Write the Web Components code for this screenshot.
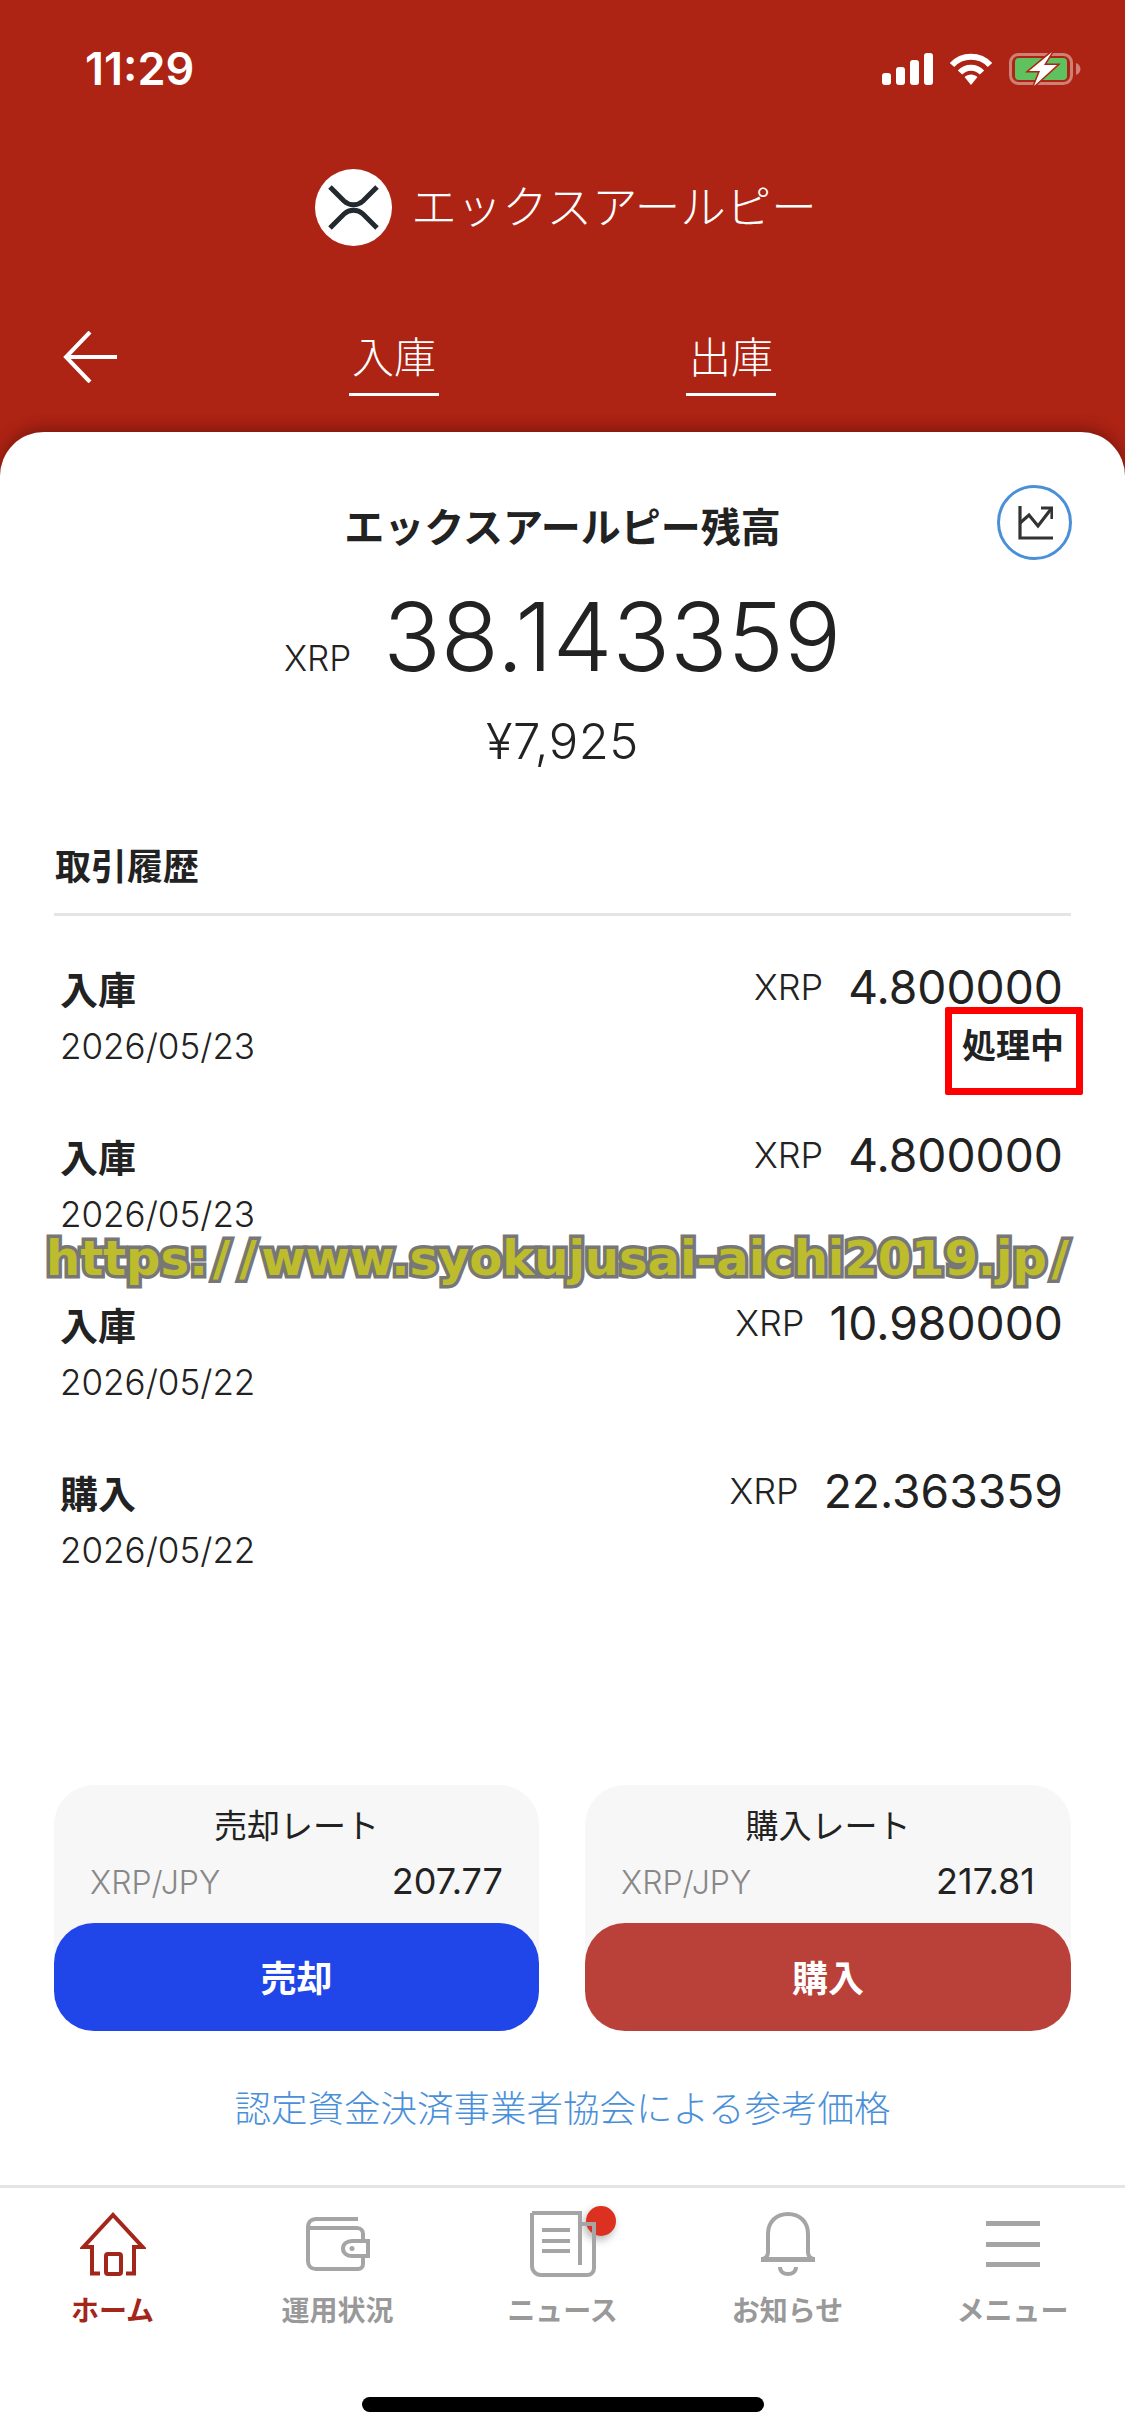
<!DOCTYPE html>
<html lang="ja">
<head>
<meta charset="utf-8">
<title>XRP</title>
<style>
  html, body { margin: 0; padding: 0; background: #fff; }
  body {
    width: 1125px;
    height: 2436px;
    overflow: hidden;
    font-family: Inter, "Noto Sans CJK JP", sans-serif;
    color: #222;
  }
</style>
</head>
<body>
<app-screen>
  <status-bar slot="top" time="11:29"></status-bar>
  <coin-title slot="top">エックスアールピー</coin-title>
  <action-bar slot="top"></action-bar>

  <balance-summary label="エックスアールピー残高" amount="38.143359" yen="¥7,925"></balance-summary>

  <history-list heading="取引履歴">
    <history-row kind="入庫" date="2026/05/23" amount="4.800000" status="処理中"></history-row>
    <history-row kind="入庫" date="2026/05/23" amount="4.800000"></history-row>
    <history-row kind="入庫" date="2026/05/22" amount="10.980000"></history-row>
    <history-row kind="購入" date="2026/05/22" amount="22.363359"></history-row>
  </history-list>

  <rate-row>
    <rate-panel title="売却レート" rate="207.77" action="売却" tone="sell"></rate-panel>
    <rate-panel title="購入レート" rate="217.81" action="購入" tone="buy"></rate-panel>
  </rate-row>
  <ref-link>認定資金決済事業者協会による参考価格</ref-link>

  <tab-bar slot="bottom"></tab-bar>
  <home-indicator slot="bottom"></home-indicator>

  <url-stamp slot="over" text="https://www.syokujusai-aichi2019.jp/"></url-stamp>
</app-screen>

<script>
const CJK = 'Inter, "Noto Sans CJK JP", sans-serif';

class AppScreen extends HTMLElement {
  constructor() {
    super();
    this.attachShadow({ mode: 'open' }).innerHTML = `
      <style>
        :host { display: flex; flex-direction: column; position: relative; width: 1125px; height: 2436px; background: #ad2314; }
        .sheet {
          flex: 1;
          display: flex;
          flex-direction: column;
          background: #fff;
          border-radius: 44px 44px 0 0;
          box-shadow: 0 -4px 14px rgba(60, 10, 5, .4);
          padding: 0 54px;
          min-height: 0;
        }
        .bottom { background: #fff; }
      </style>
      <slot name="top"></slot>
      <div class="sheet"><slot></slot></div>
      <div class="bottom"><slot name="bottom"></slot></div>
      <slot name="over"></slot>
    `;
  }
}

class StatusBar extends HTMLElement {
  constructor() {
    super();
    this.attachShadow({ mode: 'open' }).innerHTML = `
      <style>
        :host { display: flex; align-items: center; justify-content: space-between; height: 68px; padding: 35px 43px 0 85px; color: #fff; }
        .time { font: 600 45px/68px Inter, sans-serif; }
        .icons { display: flex; align-items: center; gap: 16px; }
        svg { display: block; overflow: visible; }
      </style>
      <span class="time">${this.getAttribute('time')}</span>
      <span class="icons">
        <svg width="51" height="32" viewBox="0 0 51 32" fill="#fff">
          <rect x="0" y="20" width="9" height="12" rx="3"/>
          <rect x="14" y="14" width="9" height="18" rx="3"/>
          <rect x="28" y="7" width="9" height="25" rx="3"/>
          <rect x="42" y="0" width="9" height="32" rx="3"/>
        </svg>
        <svg width="44" height="32" viewBox="0 0 44 32" fill="none" stroke="#fff" stroke-width="6">
          <path d="M3 12C13 1 31 1 41 12"/>
          <path d="M11 19.500C17 13 27 13 33 19.500"/>
          <path d="M15.500 24 22 32 28.500 24C25 20.500 19 20.500 15.500 24Z" fill="#fff" stroke="none"/>
        </svg>
        <svg width="73" height="34" viewBox="0 0 73 34">
          <rect x="1.500" y="2.500" width="61" height="29" rx="8" fill="none" stroke="#fff" stroke-opacity=".42" stroke-width="3"/>
          <path d="M67 11c3 1 4.500 3.500 4.500 6s-1.500 5-4.500 6z" fill="#fff" fill-opacity=".42"/>
          <rect x="6" y="6" width="52" height="22" rx="4" fill="#5fc25f"/>
          <path d="M43 0 20 19h11l-6 15 23-21H35z" fill="#fff" stroke="#ad2314" stroke-width="3" paint-order="stroke"/>
        </svg>
      </span>
    `;
  }
}

class CoinTitle extends HTMLElement {
  constructor() {
    super();
    this.attachShadow({ mode: 'open' }).innerHTML = `
      <style>
        :host { display: flex; align-items: center; justify-content: center; gap: 19px; height: 77px; margin-top: 66px; padding-left: 7px; color: #fff; font: 300 45.500px/77px ${CJK}; }
        svg { display: block; }
      </style>
      <svg width="77" height="77" viewBox="0 0 77 77">
        <circle cx="38.500" cy="38.500" r="38.500" fill="#fff"/>
        <path d="M15 18 29 32c5.500 5 13.500 5 19 0L62 18M15 59 29 45c5.500-5 13.500-5 19 0L62 59" fill="none" stroke="#23292f" stroke-width="5"/>
      </svg>
      <span><slot></slot></span>
    `;
  }
}

class ActionBar extends HTMLElement {
  constructor() {
    super();
    this.attachShadow({ mode: 'open' }).innerHTML = `
      <style>
        :host { display: grid; grid-template-columns: 349px 90px 247px 90px; height: 113px; margin-top: 73px; position: relative; color: #fff; font: 300 42px/1 ${CJK}; }
        .back { display: flex; align-items: flex-start; padding: 12px 0 0 63px; }
        .tab { display: flex; flex-direction: column; align-items: center; justify-content: flex-end; height: 77px; border-bottom: 3px solid #fff; padding-bottom: 14px; box-sizing: border-box; }
        svg { display: block; }
      </style>
      <span class="back">
        <svg width="54" height="52" viewBox="0 0 54 52" fill="none" stroke="#fff" stroke-width="4">
          <path d="M27 1 3 26l24 25M3 26h51"/>
        </svg>
      </span>
      <span class="tab">入庫</span>
      <span></span>
      <span class="tab">出庫</span>
    `;
  }
}

class BalanceSummary extends HTMLElement {
  constructor() {
    super();
    this.attachShadow({ mode: 'open' }).innerHTML = `
      <style>
        :host { display: flex; flex-direction: column; align-items: center; position: relative; height: 417px; box-sizing: border-box; padding-top: 71px; }
        .label { font: 700 40px/50px ${CJK}; color: #222; }
        .amount { display: flex; align-items: baseline; gap: 32px; height: 110px; margin-top: 29px; font-family: Inter, sans-serif; font-weight: 300; }
        .unit { font-size: 35px; }
        .value { font-size: 95px; line-height: 110px; }
        .yen { font: 300 49px/60px Inter, "Noto Sans CJK JP", sans-serif; letter-spacing: .5px; margin-top: 20px; }
        .chart { position: absolute; top: 53px; right: -1px; box-sizing: border-box; width: 75px; height: 75px; border-radius: 50%; border: 3.500px solid #4a90d9; display: flex; align-items: center; justify-content: center; }
        svg { display: block; }
      </style>
      <div class="label">${this.getAttribute('label')}</div>
      <div class="amount"><span class="unit">XRP</span><span class="value">${this.getAttribute('amount')}</span></div>
      <div class="yen">${this.getAttribute('yen')}</div>
      <div class="chart">
        <svg width="36" height="36" viewBox="0 0 36 36" fill="none" stroke="#333" stroke-width="3.200">
          <path d="M3 1v32h33"/>
          <path d="M3 18 12 10l9 11L34 4"/>
          <path d="M24 3h11v11"/>
        </svg>
      </div>
    `;
  }
}

class HistoryList extends HTMLElement {
  constructor() {
    super();
    this.attachShadow({ mode: 'open' }).innerHTML = `
      <style>
        :host { display: block; }
        h2 { margin: 0; padding: 0 0 28px 1px; font: 700 36px/36px ${CJK}; color: #222; border-bottom: 3px solid #e5e5e5; }
        .rows { padding-top: 50px; }
      </style>
      <h2>${this.getAttribute('heading')}</h2>
      <div class="rows"><slot></slot></div>
    `;
  }
}

class HistoryRow extends HTMLElement {
  constructor() {
    super();
    const status = this.getAttribute('status');
    this.attachShadow({ mode: 'open' }).innerHTML = `
      <style>
        :host { display: flex; justify-content: space-between; position: relative; height: 168px; padding: 0 8px 0 6px; color: #222; }
        .kind { font: 700 38px/48px ${CJK}; }
        .date { font: 300 35px/40px Inter, sans-serif; margin-top: 12px; }
        .amount { display: flex; align-items: center; justify-content: flex-end; gap: 25px; height: 48px; margin-top: -3px; font-family: Inter, sans-serif; font-weight: 300; }
        .unit { font-size: 36px; }
        .value { font-size: 46.200px; line-height: 48px; font-weight: 400; }
        .status { position: absolute; right: -12px; top: 41px; box-sizing: border-box; width: 138px; height: 88px; border: 7px solid #f00; border-radius: 2px; padding: 12px 12px 0 0; text-align: right; font: 700 34px/40px ${CJK}; }
      </style>
      <div>
        <div class="kind">${this.getAttribute('kind')}</div>
        <div class="date">${this.getAttribute('date')}</div>
      </div>
      <div class="amount"><span class="unit">XRP</span><span class="value">${this.getAttribute('amount')}</span></div>
      ${status ? `<div class="status">${status}</div>` : ''}
    `;
  }
}

class RateRow extends HTMLElement {
  constructor() {
    super();
    this.attachShadow({ mode: 'open' }).innerHTML = `
      <style>
        :host { display: grid; grid-template-columns: 485px 486px; justify-content: space-between; margin-top: auto; }
      </style>
      <slot></slot>
    `;
  }
}

class RatePanel extends HTMLElement {
  constructor() {
    super();
    const bg = this.getAttribute('tone') === 'sell' ? '#2045e8' : '#b9413a';
    this.attachShadow({ mode: 'open' }).innerHTML = `
      <style>
        :host { display: block; background: #f7f7f7; border-radius: 40px; }
        .title { text-align: center; padding-top: 17px; font: 400 33px/48px ${CJK}; color: #222; }
        .rate { display: flex; justify-content: space-between; align-items: baseline; padding: 0 36px; height: 72px; margin-top: 1px; font-family: Inter, sans-serif; line-height: 60px; }
        .pair { font-size: 32px; font-weight: 300; color: #888; }
        .num { font-size: 36px; font-weight: 400; color: #222; }
        .btn { display: flex; align-items: center; justify-content: center; height: 108px; box-sizing: border-box; padding-top: 3px; border-radius: 40px; background: ${bg}; color: #fff; font: 700 36px/1 ${CJK}; }
      </style>
      <div class="title">${this.getAttribute('title')}</div>
      <div class="rate"><span class="pair">XRP/JPY</span><span class="num">${this.getAttribute('rate')}</span></div>
      <div class="btn">${this.getAttribute('action')}</div>
    `;
  }
}

class RefLink extends HTMLElement {
  constructor() {
    super();
    this.attachShadow({ mode: 'open' }).innerHTML = `
      <style>
        :host { display: block; text-align: center; padding: 54px 0 52px; font: 300 36.500px/48px ${CJK}; color: #4a90d9; }
      </style>
      <slot></slot>
    `;
  }
}

const TAB_ICONS = {
  home: `<svg width="66" height="66" viewBox="0 0 66 66" fill="none" stroke="currentColor" stroke-width="4">
      <path d="M12 64V36H3.500L33 4 62.500 36H54V64"/>
      <path d="M10 62.500H20M56 62.500H46"/>
      <rect x="26" y="43" width="15" height="20" rx="2"/>
    </svg>`,
  wallet: `<svg width="64" height="54" viewBox="0 0 64 54" fill="none" stroke="currentColor" stroke-width="4">
      <path d="M52 2H10C5 2 2 5 2 10v34c0 5 3 8 8 8h42c3 0 5-2 5-5v-8"/>
      <path d="M3 11h48c4 0 6 3 6 6v6"/>
      <path d="M62 24H46c-5 0-9 3-9 7.500s4 7.500 9 7.500h16z" fill="#fff"/>
      <circle cx="46" cy="31.500" r="2.500" fill="currentColor" stroke="none"/>
    </svg>`,
  news: `<svg width="66" height="66" viewBox="0 0 66 66" fill="none" stroke="currentColor" stroke-width="4">
      <path d="M2 2H50V54M50 13H64V57c0 4-3 7-7 7H11c-5 0-9-4-9-9V2"/>
      <path d="M12 17h28v4H12zM12 28h28v4H12zM12 38h28v4H12z" fill="currentColor" stroke="none"/>
    </svg>`,
  bell: `<svg width="54" height="64" viewBox="0 0 54 64" fill="none" stroke="currentColor" stroke-width="4">
      <path d="M2 47c3-1 5-3 5-7V22C7 10 15 2 27 2s20 8 20 20v18c0 4 2 6 5 7"/>
      <path d="M0 47.500h54" stroke-width="5"/>
      <path d="M19 55c0 5 4 7 8 7s8-2 8-7"/>
    </svg>`,
  menu: `<svg width="54" height="46" viewBox="0 0 54 46" fill="currentColor">
      <rect width="54" height="5"/><rect y="21" width="54" height="5"/><rect y="41" width="54" height="5"/>
    </svg>`
};

class TabItem extends HTMLElement {
  constructor() {
    super();
    const active = this.hasAttribute('active');
    const badge = this.hasAttribute('badge');
    this.attachShadow({ mode: 'open' }).innerHTML = `
      <style>
        :host { display: flex; flex-direction: column; align-items: center; color: ${active ? '#a3261b' : '#a5a5a5'}; }
        .icon { position: relative; display: flex; align-items: center; justify-content: center; height: 70px; }
        .icon svg { position: relative; }
        .dot { position: absolute; left: 56px; top: -3px; width: 30px; height: 30px; border-radius: 50%; background: #dc3020; box-shadow: -2px 4px 8px rgba(0,0,0,.3); }
        .name { margin-top: 14px; font: 700 28px/36px ${CJK}; color: ${active ? '#a3261b' : '#999'}; white-space: nowrap; }
      </style>
      <div class="icon">${badge ? '<span class="dot"></span>' : ''}${TAB_ICONS[this.getAttribute('icon')]}</div>
      <div class="name">${this.getAttribute('name')}</div>
    `;
  }
}

class TabBar extends HTMLElement {
  constructor() {
    super();
    this.attachShadow({ mode: 'open' }).innerHTML = `
      <style>
        :host { display: grid; grid-template-columns: repeat(5, 225px); border-top: 3px solid #e5e5e5; padding-top: 21px; }
      </style>
      <tab-item icon="home" name="ホーム" active></tab-item>
      <tab-item icon="wallet" name="運用状況"></tab-item>
      <tab-item icon="news" name="ニュース" badge></tab-item>
      <tab-item icon="bell" name="お知らせ"></tab-item>
      <tab-item icon="menu" name="メニュー"></tab-item>
    `;
  }
}

class HomeIndicator extends HTMLElement {
  constructor() {
    super();
    this.attachShadow({ mode: 'open' }).innerHTML = `
      <style>
        :host { display: flex; justify-content: center; padding: 68px 0 24px; }
        span { width: 402px; height: 15px; border-radius: 8px; background: #000; }
      </style>
      <span></span>
    `;
  }
}

class UrlStamp extends HTMLElement {
  constructor() {
    super();
    const text = this.getAttribute('text').replace(/\//g, '<span class="slash">/</span>');
    this.attachShadow({ mode: 'open' }).innerHTML = `
      <style>
        :host { position: absolute; left: 46px; top: 1228px; white-space: nowrap; font: 700 48px/60px "DejaVu Sans", sans-serif; color: #bcbc2c; -webkit-text-stroke: 7px #777; paint-order: stroke fill; }
        .slash { margin: 0 4.500px; }
      </style>
      ${text}
    `;
  }
}

customElements.define('app-screen', AppScreen);
customElements.define('status-bar', StatusBar);
customElements.define('coin-title', CoinTitle);
customElements.define('action-bar', ActionBar);
customElements.define('balance-summary', BalanceSummary);
customElements.define('history-list', HistoryList);
customElements.define('history-row', HistoryRow);
customElements.define('rate-row', RateRow);
customElements.define('rate-panel', RatePanel);
customElements.define('ref-link', RefLink);
customElements.define('tab-item', TabItem);
customElements.define('tab-bar', TabBar);
customElements.define('home-indicator', HomeIndicator);
customElements.define('url-stamp', UrlStamp);
</script>
</body>
</html>
